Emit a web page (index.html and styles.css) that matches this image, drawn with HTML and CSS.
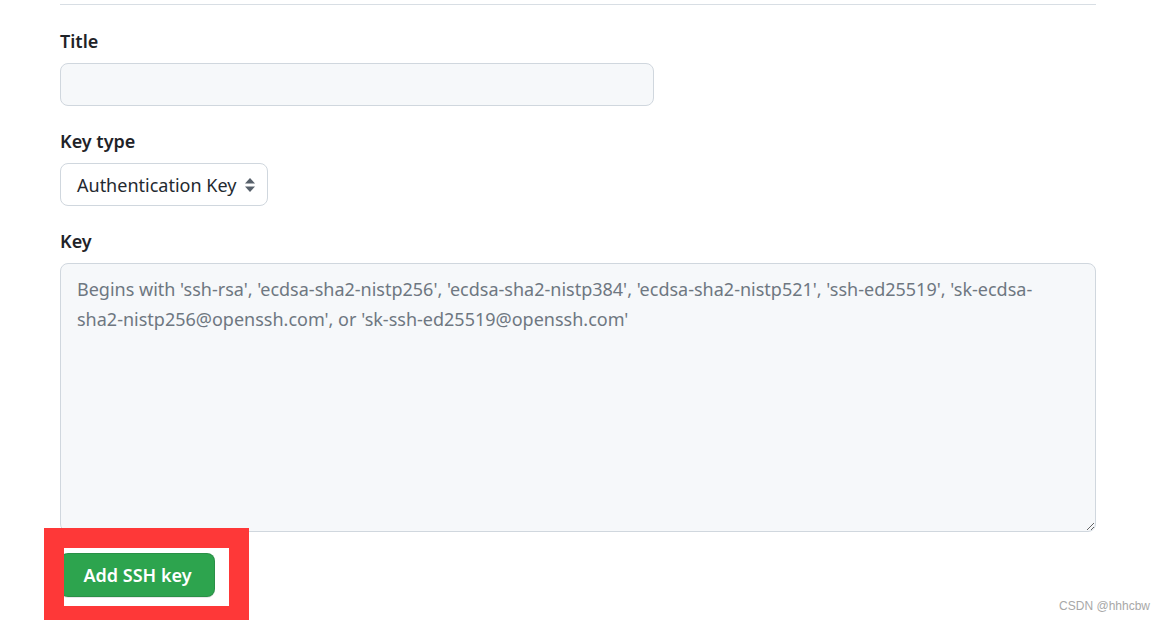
FILE: index.html
```html
<!DOCTYPE html>
<html lang="en">
<head>
<meta charset="utf-8">
<title>Add SSH key</title>
<link rel="stylesheet" href="styles.css">
</head>
<body>
<div class="page">
  <form class="form">
    <div class="group">
      <label class="label" for="title">Title</label>
      <input class="input" id="title" type="text">
    </div>
    <div class="group">
      <label class="label">Key type</label>
      <div class="select">
        <span class="select-text">Authentication Key</span>
        <svg class="select-arrows" width="12" height="16" viewBox="0 0 12 16" aria-hidden="true">
          <path d="M6 1 L11 6.5 H1 Z" fill="#57606a"/>
          <path d="M6 15 L11 9.5 H1 Z" fill="#57606a"/>
        </svg>
      </div>
    </div>
    <div class="group">
      <label class="label" for="key">Key</label>
      <textarea class="textarea" id="key" placeholder="Begins with 'ssh-rsa', 'ecdsa-sha2-nistp256', 'ecdsa-sha2-nistp384', 'ecdsa-sha2-nistp521', 'ssh-ed25519', 'sk-ecdsa-sha2-nistp256@openssh.com', or 'sk-ssh-ed25519@openssh.com'"></textarea>
    </div>
    <div class="actions">
      <button class="btn-primary" type="button">Add SSH key</button>
      <div class="highlight"></div>
    </div>
  </form>
  <div class="watermark">CSDN @hhhcbw</div>
</div>
</body>
</html>
```
FILE: styles.css
```css
html, body {
  margin: 0;
  padding: 0;
  background: #ffffff;
}
body {
  font-family: "Segoe UI", "Noto Sans", "Open Sans", sans-serif;
  color: #1f2328;
  width: 1165px;
  height: 620px;
  overflow: hidden;
}
.page {
  position: relative;
  padding: 4px 0 0 60px;
  height: 616px;
}
.form {
  width: 1036px;
  border-top: 1px solid #d8dee4;
  padding-top: 22px;
  display: flex;
  flex-direction: column;
  gap: 21px;
}
.group {
  display: flex;
  flex-direction: column;
  gap: 8px;
}
.label {
  font-size: 18px;
  font-weight: 600;
  line-height: 28px;
  height: 28px;
  color: #1f2328;
}
.input {
  box-sizing: border-box;
  width: 594px;
  height: 43px;
  border: 1px solid #d0d7de;
  border-radius: 8px;
  background: #f6f8fa;
  font: inherit;
  font-size: 18px;
  padding: 0 16px;
  outline: none;
}
.select {
  box-sizing: border-box;
  width: 208px;
  height: 43px;
  border: 1px solid #d0d7de;
  border-radius: 8px;
  background: #ffffff;
  display: flex;
  align-items: center;
  justify-content: space-between;
  padding: 0 11px 0 16px;
  font-size: 18px;
  color: #24292f;
}
.select-arrows {
  display: block;
}
.textarea {
  box-sizing: border-box;
  width: 1036px;
  height: 269px;
  border: 1px solid #d0d7de;
  border-radius: 8px;
  background: #f6f8fa;
  font-family: inherit;
  font-size: 18px;
  line-height: 30px;
  padding: 10px 40px 10px 16px;
  outline: none;
  margin: 0;
  display: block;
}
.textarea::placeholder {
  color: #6e7781;
  opacity: 1;
}
.actions {
  position: relative;
  height: 44px;
}
.btn-primary {
  box-sizing: border-box;
  width: 155px;
  height: 44px;
  border: 1px solid rgba(27, 31, 36, 0.15);
  border-radius: 8px;
  background: #2da44e;
  color: #ffffff;
  font-family: inherit;
  font-size: 18px;
  font-weight: 600;
  box-shadow: 0 1px 0 rgba(27, 31, 36, 0.1);
  padding: 0;
  cursor: pointer;
}
.highlight {
  position: absolute;
  left: -16px;
  top: -25px;
  width: 165px;
  height: 58px;
  border: 20px solid #fe3838;
}
.watermark {
  position: absolute;
  right: 15px;
  top: 599px;
  font-family: "Liberation Sans", Arial, sans-serif;
  font-size: 12px;
  color: #a8a8a8;
}
```
